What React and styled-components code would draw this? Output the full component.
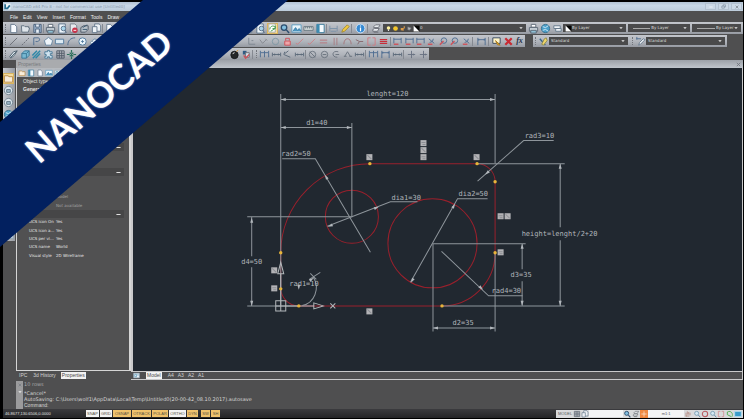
import React from 'react';
import styled, { createGlobalStyle, css } from 'styled-components';

const GlobalStyle = createGlobalStyle`
  * { box-sizing: border-box; }
  body { margin: 0; background: #000; }
  button, select, input { font: inherit; color: inherit; margin: 0; padding: 0; border: 0; border-radius: 0; }
`;

const metal = 'linear-gradient(#c3c6cc, #b0b4bb 55%, #969aa2)';
const tiny = '4px/8px "DejaVu Sans", sans-serif';

/* ---------- frame ---------- */
const Window = styled.div`
  position: relative;
  display: flex;
  flex-direction: column;
  min-height: 100vh;
  padding: 2px 1px 2px 3px;
  overflow: hidden;
  background: #000;
  color: #e4e4e4;
  font: 5px/8px "Liberation Sans", Arial, sans-serif;
`;
const TitleBar = styled.header`
  display: flex;
  align-items: center;
  height: 9px;
  gap: 2px;
  padding: 0 1px 0 1px;
  background: linear-gradient(#b3c3d4, #c9d8e7 40%, #bccbda);
  color: #8b9cae;
`;
const TitleText = styled.h1`
  flex: 1;
  margin: 0;
  font: ${tiny};
`;
const WindowButton = styled.button`
  display: grid;
  place-items: center;
  width: 11px;
  height: 7px;
  border: 1px solid #b3c1cf;
  background: #cbd8e5;
`;
const MenuBar = styled.nav`
  display: flex;
  align-items: center;
  height: 11px;
  gap: 5px;
  padding-left: 7px;
  background: #4f4f50;
`;
const MenuItem = styled.button`
  background: none;
  color: #f0f0f0;
`;

/* ---------- toolbars ---------- */
const ToolRows = styled.div`
  display: flex;
  flex-direction: column;
  gap: 1px;
  background: #4f4f50;
`;
const ToolRow = styled.div`
  display: flex;
  gap: 8px;
  height: 12px;
`;
const Toolbar = styled.div`
  display: flex;
  align-items: center;
  flex: ${(p) => (p.$grow ? '1' : 'none')};
  min-width: 0;
  background: ${metal};
`;
const Grip = styled.span`
  width: 1px;
  height: 8px;
  margin: 0 2px;
  border-left: 1px dotted #73767c;
`;
const Divider = styled.span`
  width: 1px;
  height: 9px;
  margin-right: 1px;
  background: #858991;
`;
const Group = styled.div`
  display: flex;
  flex: none;
  justify-content: space-around;
  width: ${(p) => p.$width}px;
`;
const ToolButton = styled.button`
  display: grid;
  place-items: center;
  width: 11px;
  height: 11px;
  background: none;
  ${(p) => p.$active && css`
    background: #f4dc9c;
    box-shadow: inset 0 0 0 1px #d9b45e;
  `}
`;
const Combo = styled.label`
  display: flex;
  align-items: center;
  flex: ${(p) => p.$grow} 1 0;
  min-width: 0;
  height: 8px;
  margin-right: 2px;
  padding: 0 3px 0 2px;
  background: #4a4a4b;
  color: #dcdcdc;
  font: ${tiny};
  select {
    appearance: none;
    flex: ${(p) => (p.$line ? 'none' : '1')};
    width: ${(p) => (p.$line ? `${p.$line}px` : 'auto')};
    min-width: 0;
    height: 8px;
    background: transparent;
    outline: none;
  }
`;
const LineSample = styled.span`
  flex: 1;
  height: 1px;
  margin: 0 1px 0 3px;
  background: #a8a8a8;
`;
const FxMark = styled.i`
  color: #26324a;
  font: italic 700 8px/10px "Liberation Serif", serif;
`;

/* ---------- icons ---------- */
const B = '#4d6c90';
const K = '#6b6f77';
const R = '#cf5059';
const shapes = {
  page: <path d="M3 1.5h4l2.500 2.500v6.500H3z" fill="#f8fbff" stroke="#66788c" />,
  folder: <path d="M1.500 3h3l1 1h4v1.500h1L9 10H2z" fill="#dfe5ea" stroke="#61717f" />,
  disk: <g stroke="#4a5f79"><path d="M2 1.500h8v9H2z" fill="#9eb7d0" /><path d="M4 1.500v3h4v-3M4 10.500v-4h4v4" fill="#e7eff7" /></g>,
  printer: <g stroke="#5b6774"><path d="M3.500 1.500h5v3h-5z" fill="#fff" /><path d="M1.500 5h9v4h-9z" fill="#cbd3da" /><path d="M3 8h6v3H3z" fill="#8fc0d5" /></g>,
  preview: <g stroke="#5b7189"><path d="M2 1h7v10H2z" fill="#eef5fb" /><circle cx="7" cy="6" r="2.500" fill="#a8d4ea" /><path d="M8.500 8l2 2.500" /></g>,
  pdf: <g><path d="M2.500 1h5l2 2v7h-7z" fill="#e6e9ee" stroke="#77818c" /><circle cx="7.500" cy="8" r="3" fill="#c8324a" /><path d="M6 8h3" stroke="#fff" /></g>,
  plot: <g stroke="#4e5966"><path d="M2 5l3-2h5v4l-3 3H2z" fill="#b9c2ca" /><path d="M4 7h5M4 5l5-3" stroke="#36546e" /></g>,
  pages: <g fill="#eef2f6" stroke="#66788c"><path d="M4 1h5l1.500 2v6H4z" /><path d="M1.500 4h5v6.500h-5z" /></g>,
  refresh: <g><path d="M2 1h7v9H2z" fill="#fff" stroke="#a3a8a3" /><path d="M3 7c0-4 5-5 6-2M9 3v3H6M4 9l5-3" stroke="#3d9b4c" /></g>,
  zoom: <g><circle cx="5.500" cy="5" r="3" fill="#83bfe0" stroke="#2c4d6e" strokeWidth="1.400" /><path d="M8 7.500l3 3.500" stroke="#2c4d6e" strokeWidth="1.600" /></g>,
  zoomPale: <g><circle cx="5.500" cy="5" r="3" fill="#d5e8f2" stroke="#5c86a3" /><path d="M8 7.500l3 3.500" stroke="#5c86a3" strokeWidth="1.300" /></g>,
  image: <g><path d="M1 2h10v8H1z" fill="#eaf5fb" stroke="#5c9bc0" /><path d="M2 9l3-4 2 3 2-2 2 3" fill="#4c96c0" stroke="#3c7fa8" /></g>,
  ruler: <g stroke="#66757e"><path d="M1 4h10v4H1z" fill="#d9dfdf" /><path d="M3 4v2M5 4v2M7 4v2M9 4v2" /></g>,
  panel: <g><path d="M2 1.500h8v9H2z" fill="#f5fbff" stroke="#39799a" /><path d="M2 1.500h3v9H2z" fill="#3d8bb0" /></g>,
  sheet: <path d="M2 3v6M10 3v6M2 6h8M3 9h6" stroke="#7b92a8" />,
  pencil: <path d="M2 10l1-3 5-5 2 2-5 5z" fill="#f1ca42" stroke="#a58b32" />,
  info: <g><circle cx="6" cy="6" r="4.800" fill="#3589d2" stroke="#d3e6f7" /><path d="M6 5v4M6 2.800v1" stroke="#fff" strokeWidth="1.300" /></g>,
  layers: <g stroke={K}><path d="M3 4l2-2h5l-2 3H3zM2 7l2-1h5l-2 3H2zM3 10h5" fill="#e9ecef" /></g>,
  globe: <g><circle cx="6" cy="6" r="4.500" fill="#4b9fc9" stroke="#38708d" /><path d="M3 4l3 1 3-2M3 8l3-1 3 2" stroke="#d3edf8" /></g>,
  view: <g><circle cx="6" cy="6" r="4.500" fill="#dce7ee" stroke="#71828f" /><path d="M4 5h4v3H4z" fill="#9fb9ca" stroke="#5f7586" /></g>,
  stack: <path d="M2 3h7v3H2zM4 6h6v3H4z" fill="#eff3f6" stroke="#66798b" />,
  line: <path d="M2 10l8-8" stroke={K} />,
  ray: <path d="M2 10l8-8" stroke={K} strokeDasharray="2 1" />,
  poly: <path d="M3 10V2h5c3 1 1 5-3 4" stroke={B} />,
  pentagon: <path d="M6 1.500l4.500 3.500L9 10H3L1.500 5z" fill="#eff5fa" stroke="#6987a1" />,
  rect: <path d="M1.500 3.500h9v5h-9z" fill="#dceaf3" stroke="#527a9d" />,
  arc: <path d="M2 10c0-5 3-8 8-8" stroke={B} />,
  circle: <g><circle cx="6" cy="6" r="4" fill="#e8f3fa" stroke="#527a9d" /><path d="M4.500 6h3M6 4.500v3" stroke="#527a9d" /></g>,
  ring: <circle cx="6" cy="6" r="3.500" stroke="#7f98a4" />,
  cloud: <path d="M3 9c-3-2 0-4 1-3 0-4 5-3 5 0 3 0 2 3 0 3z" fill="#eef5fa" stroke="#6987a1" />,
  corner: <path d="M3 2v7h7M6 5h2" stroke="#7e8790" />,
  vee: <path d="M2 4l3 4 4-4M8 3l2 2" stroke="#83868d" />,
  lock: <g stroke={R}><path d="M3 5.500h6v4.500H3z" fill="#eea6aa" /><path d="M4 5V2.500h4V5" /></g>,
  check: <path d="M2 8l2 1 6-6" stroke="#cc8087" />,
  equals: <path d="M2 4.500h8M2 7.500h8" stroke="#b9747b" />,
  redEquals: <path d="M2 4h8M2 6h8M2 8h8" stroke="#c82d3a" strokeWidth="1.300" />,
  bars: <path d="M4.500 2v8M7.500 2v8" stroke="#a77b81" />,
  hump: <path d="M2 9c0-8 8-8 8 0" stroke="#a3757b" />,
  branch: <path d="M2 4l4 2h4M6 6l-2 3" stroke="#85666c" />,
  brackets: <path d="M5 2H2v8h3M7 2h3v8H7" stroke="#d07c82" />,
  dimRed: <g><path d="M2 2v6M10 2v6M2 3.500h8" stroke={B} /><path d="M2 9h5" stroke={R} strokeWidth="1.500" /></g>,
  angRed: <g><path d="M3 3l6 5M4 7a4 4 0 0 0 4-4" stroke={B} /><path d="M2 9h5" stroke={R} strokeWidth="1.500" /></g>,
  cirRed: <g><circle cx="6.500" cy="5" r="3" stroke={B} /><path d="M2 9.500l4-4" stroke={R} strokeWidth="1.500" /></g>,
  dim: <path d="M2 2v8M10 2v8M2 4h8M3 3v2M9 3v2" stroke={B} />,
  dimFlat: <path d="M1.500 4v4M10.500 4v4M2 6h8M4 5v2M8 5v2" stroke="#5a6878" />,
  dimAng: <path d="M3 3l-1 3 7 3M3 5l4-3" stroke="#5a6878" />,
  dimCircle: <g stroke="#6a737e"><circle cx="6" cy="6" r="3.500" /><path d="M3 3l6 6" /></g>,
  dimRing: <g stroke="#6a737e"><circle cx="6" cy="6" r="3.500" /><path d="M4 6h4" /></g>,
  dimC: <path d="M9 3c-7-2-8 6-1 6M6 6h4" stroke="#6a737e" />,
  dimTri: <path d="M3 8l3-5 3 5M2 8h3M8 8h3" stroke="#6a737e" />,
  dimMulti: <path d="M1.500 2v7M6 2v7M10.500 2v7M2 4h8" stroke={B} />,
  plusTick: <path d="M6 2v8M2 6h8M8 5v2" stroke="#687181" />,
  note: <g><path d="M2 2h8v6H2z" fill="#fff5c9" stroke="#33455d" /><path d="M5 5l5 5-3-.5z" fill="#e9b02e" stroke="#a77921" /></g>,
  cross: <path d="M2.500 2.500l7 7M9.500 2.500l-7 7" stroke="#c92a32" strokeWidth="2.400" />,
  brush: <g><path d="M2 3l6 7" stroke="#35638a" strokeWidth="1.500" /><path d="M7 3l2-1 1 3-4 5-2-1z" fill="#eed56a" stroke="#8d8a4b" /></g>,
  dimBrush: <g><path d="M1.500 3h5M2 1v3" stroke={B} /><path d="M9 3l2 1-5 5-2 1 1-3z" fill="#e8edf1" stroke="#687b8d" /></g>,
  block: <g stroke="#3b7896"><path d="M2 5l3-3h5v5l-3 3H2z" fill="#78b8d2" /><path d="M2 5h5v5M7 5l3-3" /></g>,
  eraser: <g stroke="#50616f"><path d="M2 8l4-5 4-1-3 5-4 3z" fill="#dbe6ed" /><path d="M3 9l7-7" /></g>,
  hatch: <path d="M1.500 7l5-5M2 10l8-8M5 10l5-5" stroke="#2f88a8" strokeWidth="1.600" />,
  puzzle: <path d="M2 3h3V1.500h2V3h3v2H8v2h2v3H7V8.500H5V10H2V8h1.500V6H2z" fill="#cfe3ef" stroke="#4b7c99" />,
  grid: <path d="M2 2h8v8H2zM2 4.700h8M2 7.300h8M4.700 2v8M7.300 2v8" stroke="#515b68" />,
  move: <path d="M6 1v3M6 8v3M1 6h3M8 6h3M4 4l4 4M8 4L4 8" stroke="#2d6f5b" strokeWidth="1.300" />,
  bomb: <g><circle cx="6" cy="6.500" r="4" fill="#242628" stroke="#17191b" /><path d="M4 5l2-1" stroke="#fff" /><path d="M8 3l2-2" stroke="#d99536" /></g>,
  explode: <g><path d="M2 2h4v4H2z" fill="#315b83" /><path d="M5 4h4v5H5z" fill="#d9e2ea" stroke={K} /><path d="M3 7l2 3 4-4" stroke={R} strokeWidth="1.500" /></g>,
  bulb: <g><circle cx="6" cy="5" r="3" fill="#fff2a0" /><path d="M5 8h2v2H5z" fill="#fff" /></g>,
  sun: <circle cx="6" cy="6" r="4" fill="#f3c52c" />,
  flame: <path d="M3 9V5h5V2h2v4H8v4z" fill="#d99a48" />,
  ghost: <path d="M3 3l6 2-3 4-3-1z" fill="#b3b4b7" stroke="#6d6d70" />,
  swatch: <g><path d="M1 1h10v10H1z" fill="#050505" /><path d="M1 1l10 10H1z" fill="#fff" /></g>,
  props: <g><path d="M1 2h10v8H1z" fill="#eef4f9" stroke="#8ba4b6" /><path d="M3 4h3v4H3zM7 5h3" stroke="#3e86ab" /></g>,
  folderGold: <path d="M1.500 3h4l1 1h4v6h-9z" fill="#f7eddc" stroke="#b88a45" />,
  square: <path d="M2 2h8v8H2z" fill="#e9f1f6" stroke="#6d8fa5" />,
  orange: <g><path d="M0 0h12v12H0z" fill="#ef8a43" /><path d="M6 2v8M2 6h8" stroke="#fff0e2" /></g>,
  hand: <path d="M3 10V4M5 7V2M7 7V3M9 8V4M3 9h5" stroke="#ad7569" />,
  redRing: <circle cx="6" cy="6" r="4" stroke="#ba5c62" strokeWidth="1.600" />,
  green: <path d="M2 3c6-3 9 3 7 7M2 3v4l6 3" stroke="#48ab49" strokeWidth="1.300" />,
  monitor: <path d="M1 2h10v8H1z" fill="#3b9cca" stroke="#b3d9ea" strokeWidth="1.500" />,
  arrow: <path d="M1 4h10L6 9z" fill="#eee" />,
  minus: <path d="M1 6h10" stroke="#fff" strokeWidth="2" />,
  closeX: <path d="M2 2l8 8M10 2l-8 8" stroke="#70757d" strokeWidth="2" />,
  restore: <path d="M2 5h6v5H2zM5 5V2h6v5H8" stroke="#7c8b9b" strokeWidth="1.500" />,
  app: <g><path d="M1 1h10v10H1z" fill="#f3fafb" /><path d="M2 2v7h4l4-5" stroke="#286e90" strokeWidth="3" /></g>,
};
function Icon({ name, size = 11 }) {
  return <svg width={size} height={size} viewBox="0 0 12 12" fill="none" aria-hidden="true">{shapes[name]}</svg>;
}
const Tools = ({ width, names, active }) => (
  <Group $width={width}>
    {names.split(' ').map((n, i) => (
      <ToolButton key={i} type="button" aria-label={n} $active={n === active}><Icon name={n} /></ToolButton>
    ))}
  </Group>
);
const Pick = ({ label, value, grow, line, icons }) => (
  <Combo $grow={grow} $line={line}>
    {icons && icons.map((n) => <Icon key={n} name={n} size={7} />)}
    {line && <LineSample />}
    <select aria-label={label} defaultValue={value}><option>{value}</option></select>
    <Icon name="arrow" size={4} />
  </Combo>
);

/* ---------- workspace ---------- */
const Workspace = styled.main`
  display: flex;
  flex: 1;
  min-height: 0;
  background: #4f4f50;
`;
const SideTools = styled.aside`
  display: flex;
  flex-direction: column;
  gap: 1px;
  width: 12px;
  align-self: flex-start;
  margin: 8px 1px 0 0;
  padding: 5px 0 1px;
  background: linear-gradient(90deg, #c4c8ce, #979ba2);
`;
const Inspector = styled.section`
  display: flex;
  flex-direction: column;
  width: 115px;
`;
const PanelTitle = styled.h2`
  height: 8px;
  margin: 0;
  padding-left: 2px;
  background: #a9abae;
  color: #77797d;
  font: 400 5px/8px "Liberation Sans", Arial, sans-serif;
`;
const PanelBody = styled.div`
  flex: 1;
  border: solid #d5d5d5;
  border-width: 0 2px 1px 1px;
  background: #515152;
`;
const PanelTools = styled.div`
  display: flex;
  gap: 1px;
  height: 9px;
  padding: 0 1px;
  background: #b6babf;
  button { width: 8px; height: 9px; }
`;
const Summary = styled.div`
  height: 66px;
  padding: 0 6px;
  strong { display: block; }
`;
const SectionHead = styled.button`
  display: flex;
  align-items: center;
  justify-content: flex-end;
  width: 107px;
  height: 8px;
  padding-right: 3px;
  background: #464647;
`;
const Rows = styled.dl`
  display: grid;
  grid-template-columns: 27px 1fr;
  grid-auto-rows: 1fr;
  align-items: center;
  height: ${(p) => p.$height}px;
  margin: 0;
  padding-left: 12px;
  color: ${(p) => (p.$dim ? '#a2a2a3' : '#e6e6e6')};
  font: ${tiny};
  white-space: nowrap;
  dd { margin: 0; }
`;
const TabStrip = styled.nav`
  display: flex;
  align-items: center;
  gap: ${(p) => p.$gap}px;
  height: 9px;
  padding-left: 2px;
  ${(p) => p.$framed && css`
    border: solid #c9c9ca;
    border-width: 1px 1px 1px 0;
  `}
`;
const Tab = styled.button`
  height: 7px;
  padding: 0 1px;
  line-height: 7px;
  background: ${(p) => (p.$on ? '#f2f2f2' : 'none')};
  color: ${(p) => (p.$on ? '#4a4a4a' : '#d2d2d2')};
`;
const Viewport = styled.section`
  display: flex;
  flex: 1;
  flex-direction: column;
  min-width: 0;
`;
const DocStrip = styled.div`
  display: flex;
  align-items: center;
  justify-content: flex-end;
  height: 8px;
  padding-right: 2px;
  background: linear-gradient(#9ca1a8, #c0c6cd);
`;
const Sheet = styled.div`
  display: flex;
  flex: 1;
  min-height: 0;
  border: solid #c9c9ca;
  border-width: 0 1px 0 2px;
  background: #212830;
  svg { width: 100%; height: 100%; }
`;
const CadText = styled.text`
  fill: #b0b5ba;
  font: 7px "DejaVu Sans Mono", monospace;
`;

const notes = [
  [367, 96, 'lenght=120'], [307, 125, 'd1=40'], [282, 156, 'rad2=50'], [392, 200, 'dia1=30'],
  [525, 138, 'rad3=10'], [459, 196, 'dia2=50'], [522, 236, 'height=lenght/2+20'], [242, 264, 'd4=50'],
  [290, 286, 'rad1=10'], [511, 277, 'd3=35'], [492, 293, 'rad4=30'], [453, 325, 'd2=35'],
];
const heads = [
  [281, 99, 180], [495, 99, 0], [281, 127, 180], [352, 127, 0], [252, 217, -90], [252, 305, 90],
  [560, 163, -90], [560, 305, 90], [522, 243, -90], [522, 305, 90], [433, 327, 180], [495, 327, 0],
  [325, 174, 240], [328, 226, 158], [379, 206, -22], [455, 203, -61], [411, 282, 119],
  [485, 174, 138], [483, 289, 43], [314, 277, -35], [299, 289, 90],
];
const tags = [
  [367, 154], [421, 140], [421, 147], [421, 154], [474, 154], [498, 213], [505, 213],
  [498, 249], [272, 267], [272, 285], [367, 308],
];
const grips = [[370, 163], [477, 163], [495, 181], [495, 252], [442, 305], [299, 305], [281, 288], [281, 252]];

function Drawing() {
  return (
    <svg viewBox="134 68 608 303" role="img" aria-label="Plate drawing">
      <g fill="none" stroke="#99202c">
        <path d="M299 305.500H442A53 53 0 0 0 495.500 252V181A18 18 0 0 0 477.500 163.500H370.500A89 89 0 0 0 281.500 252V288A18 18 0 0 0 299 305.500Z" />
        <circle cx="352.500" cy="216.500" r="26.500" />
        <circle cx="433" cy="243" r="44.500" />
      </g>
      <g fill="none" stroke="#8e959b">
        <path d="M281.500 94V305M495.500 94V163M281 99.500H495M281 127.500H352M352.500 123V217" />
        <path d="M283 158.500H316L371 252M418 201.500H391L328 226M554 140.500H524L478 181M488 198.500H458L411 282" />
        <path d="M478 163.500H565M442 305.500H565M560.500 163V227M560.500 240V305" />
        <path d="M433 243.500H526M522.500 243V269M522.500 281V305M433.500 243V331M495.500 252V331M433 327.500H495" />
        <path d="M442 251L489 295.500H523M248 216.500H352M252.500 217V256M252.500 267V305M248 305.500H299" />
        <path d="M303 305C315 303 321 288 314 277M310 279L321 272M311 273L317 279" />
      </g>
      <g fill="#b3b8bd">
        {heads.map(([x, y, a], i) => <path key={i} d="M0 0L-5 -1.500V1.500Z" transform={`translate(${x + 0.5} ${y + 0.5}) rotate(${a})`} />)}
      </g>
      <g fill="none" stroke="#b4b8bb">
        <path d="M276.500 300.500h10v10h-10zM276 305.500H314M281.500 311V273M278.500 273.500L281.500 262L284.500 273.500ZM314.500 302.500L324 305.500L314.500 308.500ZM331 303l5 5M336 303l-5 5" />
      </g>
      {tags.map(([x, y], i) => (
        <g key={i}>
          <rect x={x} y={y} width="6" height="6" fill="#b3b3b6" />
          <path d={i % 2 ? `M${x + 1} ${y + 2.5}h4M${x + 2} ${y + 4.5}h3` : `M${x + 1} ${y + 1}l4 4`} stroke="#8d8f94" />
        </g>
      ))}
      <g fill="#e8b53a">
        {grips.map(([x, y], i) => <circle key={i} cx={x + 0.5} cy={y + 0.5} r="1.700" />)}
      </g>
      {notes.map(([x, y, t]) => <CadText key={t} x={x} y={y}>{t}</CadText>)}
    </svg>
  );
}

/* ---------- command line and status ---------- */
const Console = styled.section`
  display: flex;
  height: 29px;
  padding: 1px 0 0 13px;
  background: #4f4f50;
`;
const ConsoleGrip = styled.div`
  display: flex;
  flex-direction: column;
  align-items: center;
  gap: 3px;
  width: 7px;
  padding-top: 2px;
  background: #9b9b9c;
`;
const Log = styled.div`
  display: flex;
  flex-direction: column;
  flex: 1;
  padding-left: 1px;
  color: #d6d6d6;
  font: 5px/6px "DejaVu Sans", sans-serif;
  p { margin: 0; white-space: nowrap; }
`;
const Earlier = styled.p`
  padding-bottom: 3px;
  color: #a8a8aa;
`;
const Prompt = styled.label`
  display: flex;
  gap: 2px;
  font: 5px/6px "Liberation Sans", Arial, sans-serif;
  input { flex: 1; height: 6px; background: transparent; outline: none; }
`;
const StatusBar = styled.footer`
  display: flex;
  align-items: center;
  height: 9px;
  background: linear-gradient(#3b3b3e, #252527);
`;
const Coordinates = styled.output`
  width: 83px;
  padding-left: 2px;
  font-size: 4px;
`;
const Modes = styled.div`
  display: flex;
  flex: 1;
  gap: 1px;
`;
const Mode = styled.button`
  width: ${(p) => p.$width}px;
  height: 7px;
  line-height: 7px;
  font-size: 4px;
  text-align: center;
  background: ${(p) => (p.$on ? '#efc26d' : '#f3f3f3')};
  color: #55503f;
`;
const Spacer = styled.span`
  width: ${(p) => p.$width}px;
`;
const StatusTools = styled.div`
  display: flex;
  align-items: center;
  justify-content: space-between;
  width: 187px;
  height: 8px;
  padding: 0 1px 0 2px;
  background: #d9dadc;
  color: #55585c;
  font-size: 4px;
`;
const ScaleField = styled.input`
  width: ${(p) => p.$width}px;
  height: 7px;
  background: #f4f5f6;
  text-align: center;
`;

/* ---------- ribbon ---------- */
const Ribbon = styled.div`
  position: absolute;
  top: 0;
  left: 0;
  width: 288px;
  height: 247px;
  background: #02205f;
  clip-path: polygon(143px 0, 288px 0, 0 247px, 0 122px);
  pointer-events: none;
`;
const RibbonText = styled.div`
  position: absolute;
  top: 71px;
  left: -6px;
  width: 208px;
  transform: rotate(-41deg);
  color: #fff;
  font: 700 35px/48px Lato, "Open Sans", sans-serif;
  text-align: center;
  text-shadow: 0 0 2px #7f9de0;
`;

const modes = [
  ['SNAP', 13], ['GRID', 12], ['OSNAP', 18, 1], ['OTRACK', 19, 1], ['POLAR', 16, 1],
  ['ORTHO', 17], ['DYN', 11, 1], null, ['SW', 9, 1], ['SH', 9, 1],
];
const ucs = [['UCS icon On', 'Yes'], ['UCS icon a...', 'Yes'], ['UCS per vi...', 'Yes'], ['UCS name', 'World'], ['Visual style', '2D Wireframe']];

export default function App() {
  return (
    <Window>
      <GlobalStyle />
      <TitleBar>
        <Icon name="app" size={7} />
        <TitleText>nanoCAD x64 Pro 8 - not for commercial use [Untitled0]</TitleText>
        <WindowButton aria-label="Minimize"><Icon name="minus" size={4} /></WindowButton>
        <WindowButton aria-label="Restore"><Icon name="restore" size={5} /></WindowButton>
        <WindowButton aria-label="Close"><Icon name="closeX" size={4} /></WindowButton>
      </TitleBar>
      <MenuBar>
        {['File', 'Edit', 'View', 'Insert', 'Format', 'Tools', 'Draw'].map((m) => <MenuItem key={m}>{m}</MenuItem>)}
      </MenuBar>

      <ToolRows>
        <ToolRow>
          <Toolbar $grow>
            <Grip />
            <Tools width={35} names="page folder disk" />
            <Divider />
            <Tools width={57} names="printer preview pdf plot pages" />
            <Divider />
            <Tools width={162} names="page page page page page page page page page page page page page preview" />
            <Tools width={60} names="refresh zoom image ruler panel" active="refresh" />
            <Divider />
            <Tools width={23} names="sheet pencil" />
            <Divider />
            <Tools width={14} names="info" />
            <Divider />
            <Tools width={14} names="layers" />
            <Pick label="Layer" value="0" grow={145} icons={['bulb', 'sun', 'flame', 'ghost', 'swatch']} />
            <Tools width={35} names="printer globe stack" />
            <Pick label="Color" value="By Layer" grow={61} icons={['swatch']} />
            <Pick label="Line type" value="By Layer" grow={60} line={32} />
            <Pick label="Line weight" value="By Layer" grow={46} line={18} />
          </Toolbar>
        </ToolRow>
        <ToolRow>
          <Toolbar>
            <Grip />
            <Tools width={92} names="line ray poly pentagon rect arc circle cloud" />
            <Tools width={145} names="line line line line line line line line line line line line" />
            <Tools width={145} names="corner vee ring lock check check equals bars hump branch brackets redEquals" />
            <Divider />
            <Tools width={80} names="dimRed dimRed dimRed angRed cirRed cirRed angRed" />
            <Divider />
            <Tools width={14} names="dim" />
            <Divider />
            <Tools width={24} names="note cross" />
            <ToolButton aria-label="Functions"><FxMark>fx</FxMark></ToolButton>
          </Toolbar>
          <Toolbar $grow>
            <Grip />
            <ToolButton aria-label="Text style"><Icon name="brush" /></ToolButton>
            <Pick label="Text style" value="Standard" grow={1} />
            <Grip />
            <ToolButton aria-label="Dimension style"><Icon name="dimBrush" /></ToolButton>
            <Pick label="Dimension style" value="Standard" grow={1} />
          </Toolbar>
          <Spacer $width={8} />
        </ToolRow>
        <ToolRow>
          <Toolbar>
            <Grip />
            <Tools width={81} names="eraser block hatch puzzle grid move dimTri" />
            <Tools width={140} names="line line line line line line line line line line line line" />
            <Tools width={23} names="bomb explode" />
            <Divider />
            <Grip />
            <Tools width={46} names="dimMulti dimFlat dimAng dimFlat" />
            <Divider />
            <Tools width={58} names="dimCircle dimRing dimC dimTri dimFlat" />
            <Divider />
            <Tools width={36} names="dimMulti dim dimFlat" />
            <Divider />
            <Tools width={24} names="plusTick plusTick" />
          </Toolbar>
        </ToolRow>
      </ToolRows>

      <Workspace>
        <SideTools>
          {['folderGold', 'view', 'view', 'globe', 'square', 'square', 'square', 'square', 'square', 'square', 'square', 'square', 'square', 'props'].map((n, i) => (
            <ToolButton key={i} aria-label={`View ${i + 1}`} $active={i === 0}><Icon name={n} /></ToolButton>
          ))}
        </SideTools>
        <Inspector>
          <PanelTitle>Properties</PanelTitle>
          <PanelBody>
            <PanelTools>
              {['folderGold', 'panel', 'page', 'image', 'props', 'zoom'].map((n) => (
                <ToolButton key={n} aria-label={n}><Icon name={n} size={8} /></ToolButton>
              ))}
            </PanelTools>
            <Summary>Object type<strong>General</strong></Summary>
            <SectionHead aria-label="Collapse section"><Icon name="minus" size={5} /></SectionHead>
            <Rows $height={17} />
            <SectionHead aria-label="Collapse view section"><Icon name="minus" size={5} /></SectionHead>
            <Rows $height={34} $dim><dt /><dd /><dt /><dd /><dt /><dd>Model</dd><dt /><dd>Not available</dd></Rows>
            <SectionHead aria-label="Collapse UCS section"><Icon name="minus" size={5} /></SectionHead>
            <Rows $height={42}>
              {ucs.map(([k, v]) => <React.Fragment key={k}><dt>{k}</dt><dd>{v}</dd></React.Fragment>)}
            </Rows>
          </PanelBody>
          <TabStrip $gap={4}>
            <Tab>IPC</Tab><Tab>3d History</Tab><Tab $on>Properties</Tab>
          </TabStrip>
        </Inspector>
        <Viewport>
          <DocStrip><Icon name="closeX" size={5} /></DocStrip>
          <Sheet><Drawing /></Sheet>
          <TabStrip $gap={2} $framed>
            <Icon name="props" size={7} />
            <Spacer $width={2} />
            <Tab $on>Model</Tab><Spacer $width={1} />
            <Tab>A4</Tab><Tab>A3</Tab><Tab>A2</Tab><Tab>A1</Tab>
          </TabStrip>
        </Viewport>
      </Workspace>

      <Console>
        <ConsoleGrip><Icon name="closeX" size={4} /><Icon name="arrow" size={4} /></ConsoleGrip>
        <Log>
          <Earlier>10 rows</Earlier>
          <p>*Cancel*</p>
          <p>{'AutoSaving: C:\\Users\\wolf1\\AppData\\Local\\Temp\\Untitled0(20-00-42_08.10.2017).autosave'}</p>
          <Prompt>Command:<input aria-label="Command" /></Prompt>
        </Log>
      </Console>
      <StatusBar>
        <Coordinates>46.8677,130.6506,0.0000</Coordinates>
        <Modes>
          {modes.map((m, i) => (m ? <Mode key={i} $width={m[1]} $on={m[2]}>{m[0]}</Mode> : <Spacer key={i} $width={1} />))}
        </Modes>
        <StatusTools>
          <span>MODEL</span>
          <Icon name="grid" size={8} />
          <Icon name="pages" size={8} />
          <ScaleField $width={34} aria-label="Annotation" />
          <Icon name="zoom" size={8} />
          <Icon name="layers" size={8} />
          <Icon name="orange" size={8} />
          <ScaleField $width={36} aria-label="Scale" defaultValue="m1:1" />
          {['hand', 'zoomPale', 'redRing', 'zoomPale', 'brackets', 'green', 'monitor'].map((n, i) => <Icon key={i} name={n} size={8} />)}
        </StatusTools>
      </StatusBar>

      <Ribbon><RibbonText>NANOCAD</RibbonText></Ribbon>
    </Window>
  );
}
